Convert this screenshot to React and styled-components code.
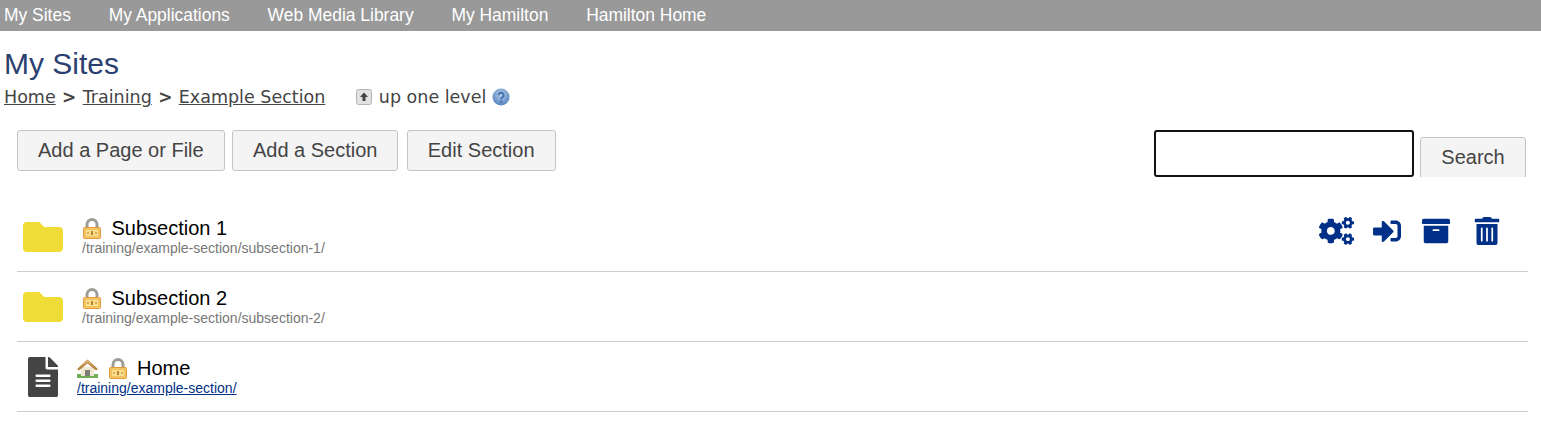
import React from "react";
import styled, { createGlobalStyle } from "styled-components";
import { FaCogs, FaSignInAlt, FaArchive, FaTrashAlt, FaFolder, FaFileAlt } from "react-icons/fa";

const Global = createGlobalStyle`
  html, body { margin: 0; padding: 0; background: #fff; font-family: "Liberation Sans", Arial, sans-serif; }
`;
const Nav = styled.nav`
  height: 31px; background: #999; display: flex; align-items: center; gap: 37.8px; padding-left: 4px;
`;
const NavLink = styled.a`
  color: #fff; font-size: 17.45px; line-height: 31px;
`;
const Main = styled.main`padding: 0 13px 0 4px;`;
const Title = styled.h1`
  margin: 16px 0 0; font-size: 30px; line-height: 34px; font-weight: 400; color: #2a4170;
`;
const Crumbs = styled.div`
  display: flex; align-items: center; height: 30px; margin-top: 1px;
  font-family: "DejaVu Sans", Verdana, sans-serif; font-size: 17.5px; color: #444;
`;
const Crumb = styled.a`color: #444; text-decoration: underline;`;
const Sep = styled.span`margin: 0 6.4px; font-weight: 700; font-size: 17px;`;
const UpLevel = styled.span`display: flex; align-items: center; margin-left: 30.5px; gap: 7px;`;
const Toolbar = styled.div`
  display: flex; justify-content: space-between; align-items: flex-start; margin: 18px 0 0 13px; height: 47px; overflow: hidden; padding-right: 2px;
`;
const Actions = styled.div`display: flex; gap: 7.3px;`;
const Btn = styled.button`
  height: 41px; padding: 0 20px; background: #f4f4f4; border: 1px solid #c4c4c4; border-radius: 3px;
  font-family: "Liberation Sans", Arial, sans-serif; font-size: 20px; color: #444;
`;
const EditBtn = styled(Btn)`margin-left: 1px;`;
const SearchBox = styled.div`display: flex; gap: 6px; align-items: flex-start;`;
const Input = styled.input`
  width: 260px; height: 47px; box-sizing: border-box; border: 2px solid #111; border-radius: 3px; background: #fff; outline: none;
`;
const SearchBtn = styled(Btn)`margin-top: 7px; width: 106px; height: 44px; padding: 0 0 3px;`;
const List = styled.ul`list-style: none; margin: 25px 0 0 13px; padding: 0;`;
const Row = styled.li`
  height: 70px; box-sizing: border-box; border-bottom: 1px solid #ccc; display: flex; align-items: flex-start;
`;
const IconCell = styled.div`
  width: ${p => p.$w}px; flex: none; display: flex; box-sizing: border-box;
  padding-top: ${p => p.$top}px; padding-left: ${p => p.$left}px; color: ${p => p.$color};
`;
const Info = styled.div`flex: 1; padding-top: 14px;`;
const NameLine = styled.div`display: flex; align-items: center; height: 24px; font-size: 20px; color: #000;`;
const Emblem = styled.svg`flex: none; margin-right: ${p => p.$mr}px;`;
const Path = styled.div`font-size: 14px; line-height: 16px; color: #777;`;
const PathLink = styled.a`font-size: 14px; line-height: 16px; color: #003087; text-decoration: underline; display: block;`;
const RowActions = styled.div`display: flex; align-items: center; gap: 21px; padding: 15px 27px 0 0; color: #003087;`;
const CogsIcon = styled(FaCogs)`width: 35px; height: 28px; margin-right: -2px;`;
const ArchiveIcon = styled(FaArchive)`margin-right: 2px;`;
const HelpSvg = styled.svg`margin-left: -1px;`;

const Lock = ({ mr = 9.5 }) => (
  <Emblem $mr={mr} width="20" height="21" viewBox="0 0 20 21">
    <path d="M5 11V6.500a5 5 0 0 1 10 0V11" fill="none" stroke="#9d9d96" strokeWidth="3" />
    <rect x="1.500" y="9.500" width="17" height="11" rx="1" fill="#f3c766" stroke="#e59a3a" />
    <rect x="3.500" y="11.500" width="13" height="7" fill="#fbdf8e" stroke="#eebb58" strokeWidth=".7" />
    <rect x="9" y="13" width="2" height="4" fill="#b9822b" />
    <path d="M5 15h2M13 15h2" stroke="#c99a45" strokeWidth="1.400" />
  </Emblem>
);
const House = () => (
  <Emblem $mr={10} width="21" height="19" viewBox="0 0 21 19">
    <rect x="0" y="15" width="21" height="4" fill="#6fae55" />
    <path d="M4 8h13v9H4z" fill="#efe6cf" />
    <path d="M8 11h5v6H8z" fill="#7e7d78" />
    <path d="M10.500 .5 0 10l2 1.500L10.500 4.500l8.500 7 2-1.500z" fill="#bb8444" />
    <path d="M10.500 1 3.500 7.500 10.500 3.500l7 4z" fill="#dcae70" />
  </Emblem>
);
const UpIcon = () => (
  <svg width="16" height="16" viewBox="0 0 16 16">
    <rect x=".5" y=".5" width="15" height="15" rx="2" fill="#e2e2e2" stroke="#b5b5b5" />
    <path d="M8 3.500 12 8H9.500v4h-3V8H4z" fill="#444" />
  </svg>
);
const HelpIcon = () => (
  <HelpSvg width="18" height="18" viewBox="0 0 18 18">
    <defs>
      <radialGradient id="h" cx=".5" cy=".35" r=".7"><stop offset="0" stopColor="#b9cde6" /><stop offset="1" stopColor="#4a7dbd" /></radialGradient>
    </defs>
    <circle cx="9" cy="9" r="8.500" fill="url(#h)" />
    <path d="M6.500 7.200a2.500 2.500 0 1 1 3.600 2.300c-.8.400-1.100.8-1.100 1.700" fill="none" stroke="#3f6fae" strokeWidth="1.800" />
    <circle cx="9" cy="13.500" r="1.100" fill="#3f6fae" />
  </HelpSvg>
);

export default function App() {
  return (
    <>
      <Global />
      <Nav>
        {["My Sites", "My Applications", "Web Media Library", "My Hamilton", "Hamilton Home"].map(t => <NavLink key={t}>{t}</NavLink>)}
      </Nav>
      <Main>
        <Title>My Sites</Title>
        <Crumbs>
          <Crumb>Home</Crumb><Sep>&gt;</Sep><Crumb>Training</Crumb><Sep>&gt;</Sep><Crumb>Example Section</Crumb>
          <UpLevel><UpIcon /><span>up one level</span><HelpIcon /></UpLevel>
        </Crumbs>
        <Toolbar>
          <Actions>
            <Btn>Add a Page or File</Btn>
            <Btn>Add a Section</Btn>
            <EditBtn>Edit Section</EditBtn>
          </Actions>
          <SearchBox>
            <Input />
            <SearchBtn>Search</SearchBtn>
          </SearchBox>
        </Toolbar>
        <List>
          <Row>
            <IconCell $w={65} $top={15} $left={6} $color="#f0dc37"><FaFolder size={40} /></IconCell>
            <Info>
              <NameLine><Lock />Subsection 1</NameLine>
              <Path>/training/example-section/subsection-1/</Path>
            </Info>
            <RowActions>
              <CogsIcon />
              <FaSignInAlt size={28} />
              <ArchiveIcon size={28} />
              <FaTrashAlt size={28} />
            </RowActions>
          </Row>
          <Row>
            <IconCell $w={65} $top={15} $left={6} $color="#f0dc37"><FaFolder size={40} /></IconCell>
            <Info>
              <NameLine><Lock />Subsection 2</NameLine>
              <Path>/training/example-section/subsection-2/</Path>
            </Info>
          </Row>
          <Row>
            <IconCell $w={60} $top={15} $left={6} $color="#444"><FaFileAlt size={40} /></IconCell>
            <Info>
              <NameLine><House /><Lock mr={9} />Home</NameLine>
              <PathLink>/training/example-section/</PathLink>
            </Info>
          </Row>
        </List>
      </Main>
    </>
  );
}
